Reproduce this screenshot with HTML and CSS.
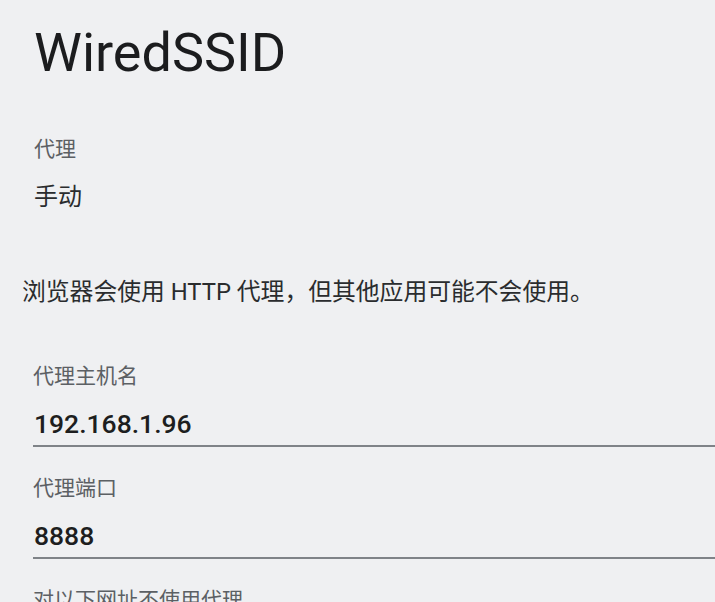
FILE: index.html
```html
<!DOCTYPE html>
<html>
<head>
  <meta charset="utf-8">
  <title>WiredSSID</title>
  <link rel="stylesheet" href="styles.css">
</head>
<body>
  <div id="proxy-dialog">
    <h1 class="title">WiredSSID</h1>

    <div class="field">
      <div class="label">代理</div>
      <div class="value">手动</div>
    </div>

    <p class="note">浏览器会使用 HTTP 代理，但其他应用可能不会使用。</p>

    <div class="input-field">
      <div class="label">代理主机名</div>
      <div class="input-text">192.168.1.96</div>
    </div>

    <div class="input-field">
      <div class="label">代理端口</div>
      <div class="input-text">8888</div>
    </div>

    <div class="input-field">
      <div class="label">对以下网址不使用代理</div>
    </div>
  </div>
</body>
</html>
```

FILE: styles.css
```css
body {
  font-family: Roboto, "Noto Sans CJK SC", sans-serif;
  background-color: #eff0f2;
  margin: 0;
  padding: 0;
  overflow: hidden;
}

#proxy-dialog {
  padding-left: 22px;
}

.title {
  margin: 21px 0 0 12px;
  font-size: 54px;
  font-weight: 400;
  line-height: 64px;
  color: #1b1c1e;
}

.field {
  margin: 50px 0 0 12px;
}

.label {
  font-size: 21px;
  line-height: 28px;
  color: #5c6064;
}

.value {
  margin-top: 18px;
  font-size: 24px;
  line-height: 32px;
  color: #2a2c2e;
}

.note {
  margin: 63px 0 0 0;
  font-size: 23.8px;
  line-height: 32px;
  color: #2a2c2e;
}

.input-field {
  margin: 54px 0 0 11px;
}

.input-field + .input-field {
  margin-top: 27px;
}

.input-text {
  margin-top: 16px;
  padding: 0 0 3px 1px;
  font-size: 26.5px;
  font-weight: 500;
  line-height: 36px;
  color: #1d1e20;
  border-bottom: 2px solid #7f8388;
}
```
